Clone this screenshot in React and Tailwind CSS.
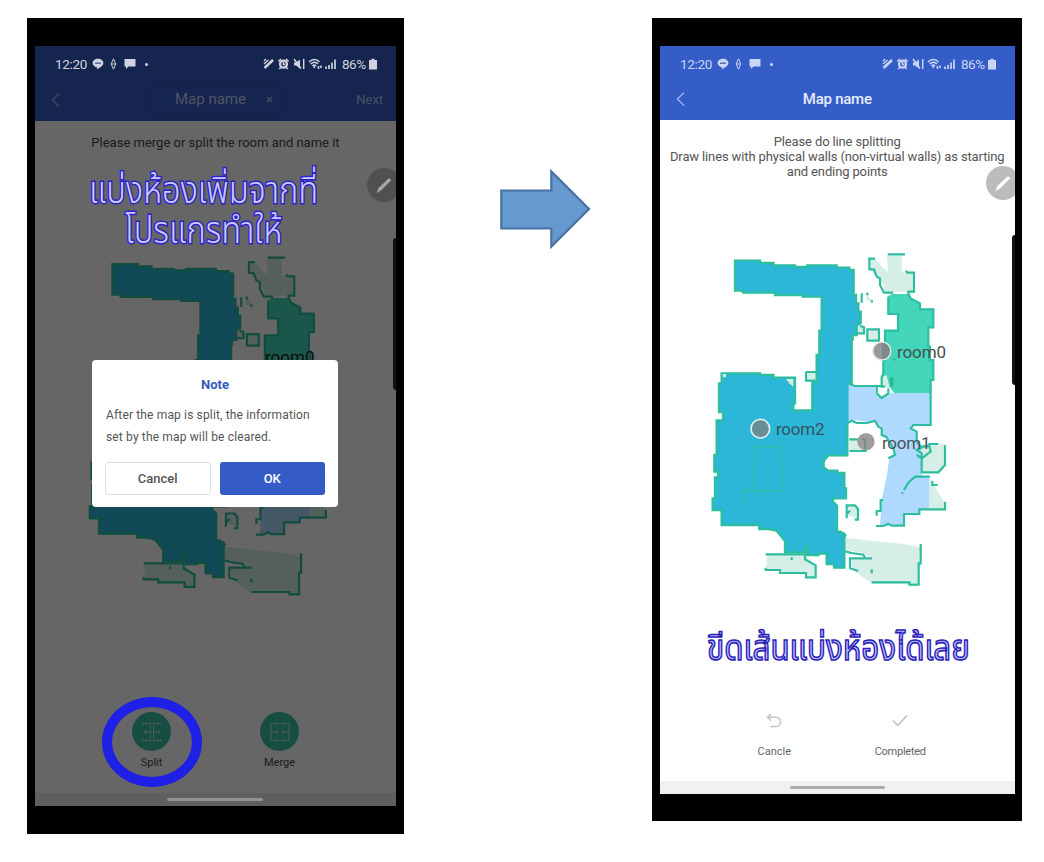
import React from "react";

const ROOM2 =
  "M105 62H180V69H220V76H285V81H322V76H410V83H448V90H461V165H468V190H475V215H482V250L470 256V285H458V298H455V430H442V646H385L371 664V682L385 692H412V699H433V745H438V775H399V785L411 797V875H422L433 886V983H402V972H380V941H355V945H322V920H316V937H255V903L230 872L205 867H178V855H65V810H38V775H45V712H54V695H43V645H50V541H69V516H57V430H65V400H180V405H220L222 413H285V490H280V511H337V425H350V345H358V272H365V170H308V165H225V158H130L125 152H105Z";
const ROOM0 =
  "M563 170L575 162H630V175L660 190V208H700V262H685V320H690V360H700V420H692V460H583L568 440H548V405H550V360H555V272H594V222H563Z";
const ROOM1 =
  "M442 430L465 438H525V462L545 475L565 460H692V555H640L632 565L650 575V605L665 622V705L688 715V810H655V822H612V857H540L545 780L560 710L568 655L585 640L560 590L545 585V560L530 555L525 543L500 545L470 540L442 550Z";

function FloorMap({ className, centered }) {
  return (
    <svg className={className} viewBox="0 0 780 1080" preserveAspectRatio="none" fill="none">
      <g fill="#d5eee6">
        <path d="M560 47H605V95H640V155H552V135L530 110L508 88V58L525 54L545 80L565 96Z" />
        <path d="M436 893L520 903L610 912L660 922L655 1030H515L475 1003L455 980V955H515L490 940L436 930Z" />
        <path d="M200 945H315L345 975V1010H320V1000H240V990H200Z" />
        <path d="M665 612H735V675L715 697H665ZM688 715L735 790V808H688Z" />
        <path d="M318 395H350V422H318ZM502 268H537V302H502ZM470 256H492V280H470ZM448 598H497V633H448ZM440 797H472V835L440 825ZM500 165L517 180V186L497 180Z" />
      </g>
      <path d={ROOM1} fill="#b0d9ff" />
      <path d={ROOM2} fill="#2cb7d9" stroke="#2dbd9f" strokeWidth="7" />
      <path d={ROOM0} fill="#43d6ba" />
      <path d="M440 436V550" stroke="#2cb7d9" strokeWidth="9" />
      <path d="M545 412L560 405L568 440H545Z" fill="#d5eee6" />
      <g fill="#d5eee6">
        <path d="M68 402H78V412H68ZM258 417H280V440L268 430Z" />
      </g>
      <g stroke="#2dbd9f" strokeWidth="6.5">
        <path d="M563 43H615M525 56H508V88H522L530 110L540 115V135L552 158H580M618 92L622 98H642V155H625V162L632 175L660 190V208H700V262H685V320H690V360H700V420H692V555H640L632 565L650 575V605L665 622" />
        <path d="M565 170V222H594V272H555V360H550V400L545 412V440H555L530 438V460L545 474L565 460V445M442 430L465 438H530" />
        <path d="M442 550L455 542L470 549H500L525 543L535 560L545 565V585L558 590L580 625L585 645L565 655" />
        <path d="M502 268H537V302H502ZM480 258L492 262V280H465M318 396H350M318 395V422H345M485 160V188M500 158L504 166M512 184H519" />
        <path d="M448 598H497V633H448M685 612H715M735 616V675L715 697H665V640L650 630L670 620L688 618L692 635L665 655L650 645M690 710H645L625 728L612 750M607 757V762M697 722V735H713M735 785V808H658V822H612V857H575L565 851L550 858H528M550 780H542V813H530V827" />
        <path d="M440 835V796H465L474 807V839H464M440 822L450 812" />
        <path d="M197 943H315V958L347 976V1012H318V999H240V990H197V983M275 952V960M430 877L438 890M436 934L455 939L490 944L497 955H450V985L475 993M497 955H516M515 988V1000M662 912V970H656V1034H628V1027H515" />
      </g>
      <path
        d="M168 620L163 655V750H130V782M168 620H238V660L248 670V752H130M184 752V780"
        stroke="#2dbdb1"
        strokeWidth="5"
      />
      <path d="M568 355L588 363V358ZM570 412H580V440H570Z" fill="#2fb494" />
      {!centered && (
        <g>
          <circle cx="545" cy="333" r="27" fill="#999" stroke="#e9e9e9" strokeWidth="5" />
          <path d="M545 308A25 25 0 0 1 545 358Z" fill="#7f8a88" />
          <circle cx="181" cy="566" r="28" fill="#698e98" stroke="#dcecef" strokeWidth="5" />
          <circle cx="498" cy="605" r="26" fill="#a19c9b" />
          <path d="M485 598H495V628" stroke="#719187" strokeWidth="6" />
        </g>
      )}
    </svg>
  );
}

function StatusBar({ className }) {
  return (
    <div className={"flex items-center h-9 " + className}>
      <span className="text-[13.500px] leading-4 w-[38px] pl-px whitespace-nowrap tracking-[-0.3px]">12:20</span>
      <svg className="w-3 h-3" viewBox="0 0 12 12">
        <path d="M6 .8C3 .8.6 2.7.6 5.100c0 2.100 1.900 3.900 4.500 4.300v1.900C8 9.800 11.400 7.700 11.400 5.100 11.400 2.700 9 .8 6 .8Z" fill="currentColor" />
        <path d="M3 5.200H9" stroke="#4a5f9c" strokeWidth="1.300" />
      </svg>
      <svg className="w-[7px] h-3 ml-[6px]" viewBox="0 0 7 12" fill="none" stroke="currentColor">
        <path d="M3.500 .8L5.800 6L3.500 11.200L1.200 6ZM1.700 6H5.300" />
      </svg>
      <svg className="w-3 h-3 ml-[7px]" viewBox="0 0 12 12">
        <path d="M.5 1H11.500V8.500H4.500L2 11V8.500H.5Z" fill="currentColor" />
      </svg>
      <span className="w-[3px] h-[3px] rounded-full bg-current ml-[9px]" />
      <span className="grow" />
      <svg className="w-[11px] h-3" viewBox="0 0 11 12" fill="none" stroke="currentColor">
        <path d="M1.500 10L10 2" strokeWidth="2.600" />
        <path d="M1 3L3 1M1 6L5.500 2" strokeWidth="1.400" />
      </svg>
      <svg className="w-[11px] h-3 ml-1" viewBox="0 0 11 12" fill="none" stroke="currentColor">
        <circle cx="5.500" cy="6.200" r="3.500" strokeWidth="2.200" />
        <path d="M.5 3.500L3 1.200M10.500 3.500L8 1.200M2.800 9.300L1.300 11M8.200 9.300L9.700 11M5.500 4V6.500H7.300" strokeWidth="1.600" />
      </svg>
      <svg className="w-3 h-3 ml-1" viewBox="0 0 12 12" fill="none" stroke="currentColor">
        <path d="M1 4.500H3L7 1.500V10.500L3 7.500H1Z" fill="currentColor" stroke="none" />
        <path d="M1 1L8 10.500M10.700 1V11" strokeWidth="1.500" />
      </svg>
      <svg className="w-[14px] h-3 ml-[3px]" viewBox="0 0 14 12" fill="none" stroke="currentColor">
        <path d="M1 4C4 .8 8.500 .8 11.500 4M2.700 6C5 3.600 7.800 3.600 10 6M4.500 8C5.600 6.800 7 6.800 8 8" strokeWidth="1.500" />
        <path d="M6.300 8V10M10.500 8V11M13 7.500V10" strokeWidth="1.600" />
      </svg>
      <svg className="w-[11px] h-3 ml-[3px]" viewBox="0 0 11 12" fill="none" stroke="currentColor">
        <path d="M1 8.500V11M4 7V11M7 4.500V11M10 1.500V11" strokeWidth="1.700" />
      </svg>
      <span className="text-[13.500px] leading-4 ml-[6px] w-[25px] whitespace-nowrap tracking-[-0.500px]">86%</span>
      <svg className="w-2 h-3 ml-[2px] mr-px" viewBox="0 0 8 12">
        <path d="M2.500 .8H5.500V2H8V11.500H0V2H2.500Z" fill="currentColor" />
      </svg>
    </div>
  );
}

function Back() {
  return (
    <svg className="w-[9px] h-4" viewBox="0 0 9 16" fill="none" stroke="#9fb4e8" strokeWidth="1.300">
      <path d="M8 1.500L1.500 8L8 14.500" />
    </svg>
  );
}

function PencilHandle({ className, disc }) {
  return (
    <div className={"absolute w-[29px] h-[34px] overflow-hidden " + className}>
      <div className={"w-[34px] h-[34px] rounded-full " + disc}>
        <svg className="w-[34px] h-[34px]" viewBox="0 0 34 34">
          <path d="M9.500 25L11.500 20L22 10L24.300 12.300L14 22.500Z" fill="currentColor" />
        </svg>
      </div>
    </div>
  );
}

function RoundAction({ label, children }) {
  return (
    <div className="flex flex-col items-center w-32">
      <div className="flex items-center justify-center w-[39px] h-[39px] rounded-full bg-[#3bc2a2]">
        <svg className="w-5 h-5" viewBox="0 0 20 20" fill="none" stroke="#b6eade" strokeWidth="1">
          {children}
        </svg>
      </div>
      <span className="mt-[4px] text-[11px] leading-4 text-[#484848]">{label}</span>
    </div>
  );
}

function SplitPhone() {
  return (
    <section className="w-[377px] h-[816px] bg-black pt-7 pl-2 pr-2">
      <div className="relative w-[361px] h-[760px] bg-white overflow-hidden">
        <div className="h-[75px] bg-[#355dc8] pt-9">
          <div className="relative flex items-center h-[35px] pl-4 pr-[13px]">
            <Back />
            <div className="flex items-center ml-[89px] w-[132px] h-[29px] border border-[#3052b3] rounded pl-[25px]">
              <span className="text-[15px] text-[#c4d2f6] w-[71px] whitespace-nowrap">Map name</span>
              <svg className="w-[7px] h-[7px] ml-[20px]" viewBox="0 0 7 7" stroke="#aabdf0" strokeWidth="1.400">
                <path d="M1 1L6 6M6 1L1 6" />
              </svg>
            </div>
            <span className="ml-auto text-[13.500px] text-[#b4c5f2] tracking-[-0.2px]">Next</span>
          </div>
        </div>
        <p className="mt-[14px] text-center text-[13px] leading-4 text-[#484848] whitespace-nowrap">
          Please merge or split the room and name it
        </p>
        <div className="relative mt-[92px] ml-[42px] w-[264px] h-[367px]">
          <FloorMap className="w-[264px] h-[367px]" centered />
          <span className="absolute left-[188px] top-[102px] text-[17px] leading-6 text-[#222]">room0</span>
        </div>
        <div className="flex justify-center mt-[102px]">
          <RoundAction label="Split">
            <path d="M1 3V1.500H8.500V6M8.500 8V12M8.500 14V18.500H1V17M2 10H8M4 8L2 10L4 12M19 3V1.500H11.500V18.500H19V17M12 10H18M16 8L18 10L16 12" />
          </RoundAction>
          <RoundAction label="Merge">
            <path d="M8 3V1.500H1V18.500H8V17M2 10H8M6 8L8 10L6 12M12 3V1.500H19V18.500H12V17M18 10H12M14 8L12 10L14 12" />
          </RoundAction>
        </div>
        <div className="absolute inset-x-0 bottom-0 h-[13px] bg-[#eee]" />
        <div className="absolute inset-0 bg-black/60" />
        <div className="absolute left-[132px] bottom-[5px] w-24 h-[3px] rounded bg-[#929292]" />
        <StatusBar className="absolute left-[19px] top-0 w-[324px] text-[#d0d3df]" />
        <PencilHandle className="right-0 top-[122px] text-[#a5a5a5]" disc="bg-[#505050]" />
        <div className="absolute right-0 top-[192px] w-[3px] h-[152px] rounded-l bg-[#111]" />
        <div className="absolute left-0 top-[126px] w-[337px] flex flex-col items-center text-[#c9c9ff] font-light font-['Noto_Sans_Thai','Noto_Sans','Open_Sans',sans-serif] text-[37px] leading-[40px] whitespace-nowrap scale-x-[0.88] [-webkit-text-stroke:3px_#2c22c8] [paint-order:stroke_fill]">
          <span>แบ่งห้องเพิ่มจากที่</span>
          <span>โปรแกรทำให้</span>
        </div>
        <div className="absolute left-[67px] top-[651px] w-[100px] h-[90px] rounded-[50%] border-[10px] border-[#1f20e6]" />
        <div className="absolute left-[57px] top-[314px] w-[246px] h-[147px] rounded bg-white px-[13px] pt-[16px]">
          <h2 className="text-center text-[13px] leading-[18px] font-bold text-[#3558b8]">Note</h2>
          <p className="mt-[11px] ml-[1px] text-[12px] leading-[21.500px] text-[#555] whitespace-nowrap tracking-[0.150px]">
            After the map is split, the information
            <br />
            set by the map will be cleared.
          </p>
          <div className="flex gap-[9px] mt-[14px]">
            <button className="w-[106px] h-[33px] border border-[#ddd] rounded-[3px] text-[13px] font-medium text-[#555]">Cancel</button>
            <button className="w-[106px] h-[33px] rounded-[3px] bg-[#355cc6] text-[13px] font-medium text-white">OK</button>
          </div>
        </div>
      </div>
    </section>
  );
}

function DrawPhone() {
  return (
    <section className="w-[370px] h-[803px] bg-black pt-7 pl-2">
      <div className="relative w-[354.500px] h-[747.500px] bg-white overflow-hidden">
        <div className="h-[74px] bg-[#355dc8]">
          <StatusBar className="ml-[19px] w-[318px] text-[#c9d5f5]" />
          <div className="relative flex items-center h-[34px] pl-4">
            <Back />
            <span className="absolute inset-x-0 text-center text-[15px] font-medium text-[#e6ecfb] tracking-[-0.250px]">Map name</span>
          </div>
        </div>
        <p className="mt-[14px] text-center text-[13px] leading-[15px] text-[#555] whitespace-nowrap tracking-[-0.130px]">
          Please do line splitting
          <br />
          Draw lines with physical walls (non-virtual walls) as starting
          <br />
          and ending points
        </p>
        <div className="relative mt-[61px] ml-10 w-[260px] h-[360px]">
          <FloorMap className="w-[260px] h-[360px]" />
          <span className="absolute left-[197px] top-[100px] text-[17px] leading-6 text-[#45504f] tracking-[-0.100px]">room0</span>
          <span className="absolute left-[76px] top-[177px] text-[17px] leading-6 text-[#34535d] tracking-[-0.250px]">room2</span>
          <span className="absolute left-[182px] top-[191px] text-[17px] leading-6 text-[#4c5359] tracking-[-0.250px]">room1</span>
        </div>
        <div className="absolute left-0 top-[578px] w-[357px] text-center text-[#c5c5ff] font-normal font-['Noto_Sans_Thai','Noto_Sans','Open_Sans',sans-serif] text-[36px] leading-[50px] whitespace-nowrap scale-x-[0.87] [-webkit-text-stroke:1.600px_#2c22b8]">
          ขีดเส้นแบ่งห้องได้เลย
        </div>
        <div className="flex justify-center mt-[113px] text-[#c4c4c4]">
          <div className="flex flex-col items-center w-[126px]">
            <svg className="w-4 h-4" viewBox="0 0 16 16" fill="none" stroke="currentColor" strokeWidth="1.500">
              <path d="M5 1L1.500 4.300L5 7.600M1.500 4.300H10A4.600 4.600 0 0 1 10 13.500H4.500" />
            </svg>
            <span className="mt-[15px] text-[11px] leading-4 text-[#666]">Cancle</span>
          </div>
          <div className="flex flex-col items-center w-[126px]">
            <svg className="w-4 h-4" viewBox="0 0 16 16" fill="none" stroke="currentColor" strokeWidth="1.700">
              <path d="M1 7.500L5.800 12.500L15 2.500" />
            </svg>
            <span className="mt-[15px] text-[11px] leading-4 text-[#666] tracking-[-0.250px]">Completed</span>
          </div>
        </div>
        <div className="absolute inset-x-0 bottom-0 h-[13px] bg-[#f1f1f1] flex justify-center pt-[5px]">
          <div className="w-[95px] h-[3px] rounded bg-[#acacac]" />
        </div>
        <PencilHandle className="right-0 top-[120px] text-white" disc="bg-[#bcbcbc]" />
        <div className="absolute right-0 top-[189px] w-[3px] h-[150px] rounded-l bg-[#111]" />
      </div>
    </section>
  );
}

export default function App() {
  return (
    <main className="w-[1044px] h-[862px] bg-white flex items-start pt-[18px] pl-[27px] font-[Roboto,'Liberation_Sans',sans-serif] overflow-hidden">
      <SplitPhone />
      <svg className="w-[96px] h-[84px] ml-[94px] mt-[149px]" viewBox="0 0 96 84">
        <path d="M3.300 23.500H53.300V4.500L91 42L53.300 79.500V61.500H3.300Z" fill="#6699d0" stroke="#4772a2" strokeWidth="2.200" />
      </svg>
      <div className="w-[58px]" />
      <DrawPhone />
    </main>
  );
}
